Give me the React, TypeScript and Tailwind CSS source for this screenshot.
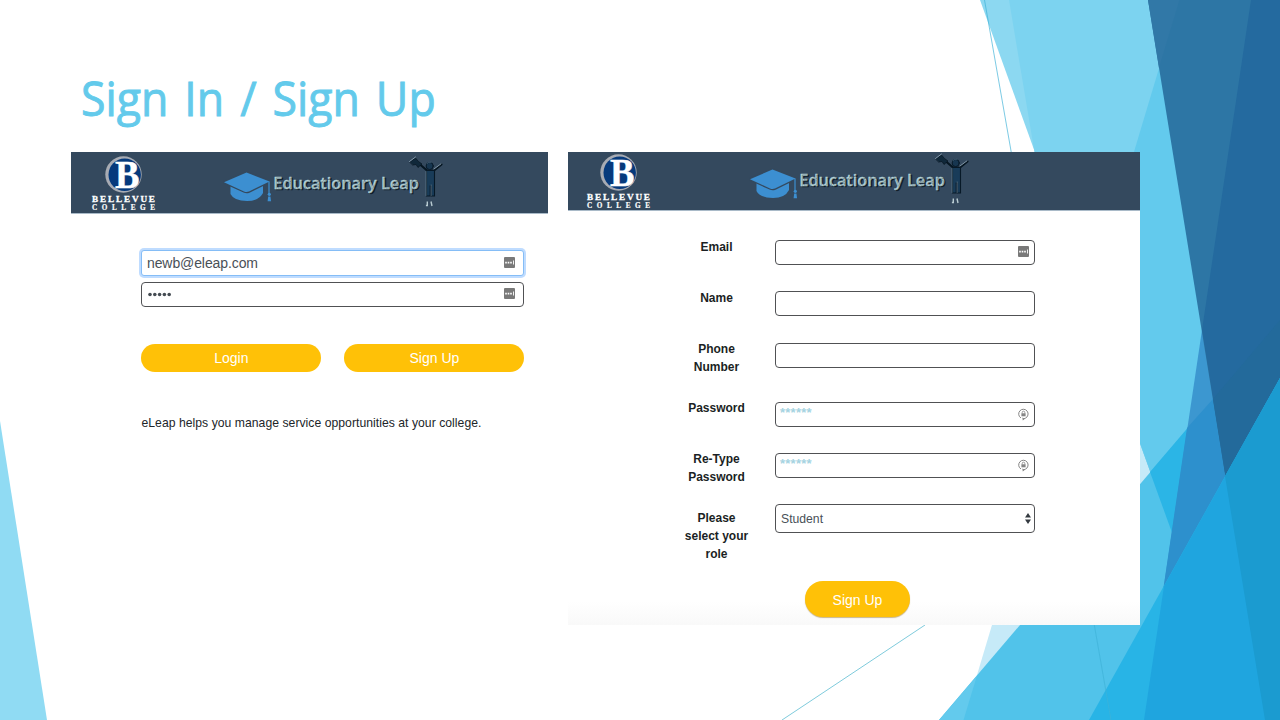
import type { ReactNode } from "react";

const SANS = "font-['Liberation_Sans',Arial,sans-serif]";

function Facets() {
  return (
    <svg className="absolute inset-0 h-full w-full" viewBox="0 0 1280 720" aria-hidden="true">
      <polygon points="0,421 47,720 0,720" fill="#90dbf3" />
      <polygon points="1179.5,0 1280,0 1280,720 963.5,720" fill="#c6eaf8" />
      <polygon points="980,0 1089,302 700,302 700,0" fill="#fff" />
      <polygon points="980,0 1280,0 1280,720 1240,720" fill="#8cd8f1" />
      <polygon points="1009,0 1280,0 1280,720 1240,720 1034.5,152" fill="#7cd3f0" />
      <polygon points="1179.5,0 1280,0 1280,720 1240,720 1089,302" fill="#63caed" />
      <polygon points="1280,320 1280,720 939,720" fill="#51c3ea" />
      <polygon points="977,675.5 963.5,720 939,720" fill="#63caed" />
      <polygon points="1150,472 1280,320 1280,720 1240,720" fill="#2bb5e6" />
      <polygon points="1202,330 1265,720 1144,720" fill="#3c97d0" />
      <polygon points="1187,428 1213,399 1265,720 1144,720" fill="#2d90cd" />
      <polygon points="1148,0 1280,0 1280,720 1265,720" fill="#2d76a5" />
      <polygon points="1148,0 1179.5,0 1159,68" fill="#3178a7" />
      <polygon points="1251,0 1280,0 1280,720 1265,720 1202,330" fill="#246a9f" />
      <polygon points="1213,399 1280,320 1280,720 1265,720" fill="#236a9b" />
      <polygon points="1280,378 1280,720 1089,720" fill="#28b4e6" />
      <polygon points="1164,586 1280,378 1280,720 1144,720" fill="#1fa5df" />
      <polygon points="1225,476 1280,378 1280,720 1265,720" fill="#1b9bd0" />
      <line x1="984.5" y1="0" x2="1111" y2="720" stroke="#3fb3d8" strokeWidth="0.8" opacity="0.85" />
      <line x1="782" y1="720" x2="925" y2="625" stroke="#7fcbdc" strokeWidth="1" />
    </svg>
  );
}

function CollegeLogo() {
  return (
    <svg width="70" height="61" viewBox="0 0 70 61" className="shrink-0" role="img" aria-label="Bellevue College">
      <circle cx="34.5" cy="22.5" r="18.2" fill="#a7abb3" />
      <circle cx="35.7" cy="22.7" r="16.2" fill="#063a7c" />
      <text x="26" y="35.5" textLength="24.5" lengthAdjust="spacingAndGlyphs" fill="#fff" stroke="#fff" strokeWidth="0.4" className="font-['Liberation_Serif',serif] text-[39px] font-bold">B</text>
      <text x="3" y="50" textLength="63" fill="#fff" stroke="#fff" strokeWidth="0.3" className="font-['Liberation_Serif',serif] text-[9.2px] font-bold">BELLEVUE</text>
      <text x="3" y="57.5" textLength="63" fill="#fff" stroke="#fff" strokeWidth="0.2" className="font-['Liberation_Serif',serif] text-[7.2px] font-bold">COLLEGE</text>
    </svg>
  );
}

function LeapLogo() {
  return (
    <svg width="222" height="61" viewBox="0 0 222 61" className="shrink-0" role="img" aria-label="Educationary Leap">
      <path d="M7.5 33V42Q11 49 24 49Q36 49 40 41V33Z" fill="#3c8fd1" />
      <path d="M1 30.2L23.5 20.5L46.5 29.5L26 39.5Q23.5 40.5 21 39.4Z" fill="#3c8fd1" stroke="#34495e" strokeWidth="2.6" paintOrder="stroke" />
      <path d="M46 29.5V42" stroke="#3c8fd1" strokeWidth="1.2" />
      <circle cx="46.3" cy="42.3" r="1.6" fill="#3c8fd1" />
      <path d="M45.2 44.5H47.4L48.1 49.3H44.6Z" fill="#3c8fd1" />
      <g className="font-['Open_Sans','Noto_Sans',sans-serif] text-[16px] font-semibold">
        <text x="50.3" y="36.6" textLength="145.5" lengthAdjust="spacingAndGlyphs" fill="#b6d2d6" stroke="#b6d2d6" strokeWidth="0.3" className="[text-shadow:1.4px_1.6px_0.6px_#101e29]">Educationary Leap</text>
      </g>
      <g fill="none" strokeLinecap="round">
        <path d="M197 12.5L204 18.5H211L218.5 12.5" stroke="#061622" strokeWidth="2.2" />
        <path d="M187 10L192.5 6L195.5 9.5L199 12L195 15.5L193 12.5L190 13Z" fill="#10283a" stroke="#06141f" strokeWidth="0.7" />
        <path d="M186.5 9.5L192.5 5" stroke="#8298aa" strokeWidth="1" />
        <path d="M203.5 18.5H211.5V44H208.5V34H207.2V44H203.5Z" fill="#193c59" stroke="#071927" strokeWidth="1.1" />
        <path d="M203 19.5V43.5M208.2 33V43.5" stroke="#6d8798" strokeWidth="0.7" />
        <circle cx="206.7" cy="14" r="3.6" fill="#173650" stroke="#071927" />
        <path d="M204 11.5A4 4 0 0 1 208 10.2" stroke="#4d6e86" strokeWidth="0.7" />
        <path d="M211 17L218 11.8" stroke="#8297a7" strokeWidth="1" />
        <path d="M204.3 49.5V53.5H202.9M208 49.5L209 54" stroke="#b8cbd1" strokeWidth="1.4" strokeLinecap="butt" />
      </g>
    </svg>
  );
}

function KeyIcon() {
  return (
    <svg width="11" height="11" viewBox="0 0 11 11" className="-mt-px shrink-0" aria-hidden="true">
      <rect width="11" height="11" rx="1" fill="#797979" />
      <path d="M1.2 4.8h1.6v1.6H1.2zM3.7 4.8h1.6v1.6H3.7zM6.2 4.8h1.6v1.6H6.2zM9 3.5h.9v4H9z" fill="#fff" />
    </svg>
  );
}

function LockIcon() {
  return (
    <svg width="11" height="13" viewBox="0 0 11 13" className="mt-px shrink-0" fill="none" stroke="#858585" aria-hidden="true">
      <path d="M3 10A4.7 4.7 0 1 1 7.4 10.2L5 11.2" strokeWidth="1" />
      <path d="M4.3 9.4L6.8 10.8L4.8 12.6Z" fill="#858585" stroke="none" />
      <path d="M4.2 5.6V4.5a1.3 1.3 0 0 1 2.6 0V5.6" strokeWidth="0.8" />
      <rect x="3.4" y="5.3" width="4.2" height="3" fill="#858585" stroke="none" />
    </svg>
  );
}

function Field({ label, children, className }: { label: string; children?: ReactNode; className: string }) {
  return (
    <div className={`flex items-start ${className}`}>
      <div className="w-[81px] text-center text-[12px] leading-[18px] font-bold whitespace-pre-line text-[#1b1f24]">{label}</div>
      {children}
    </div>
  );
}

const BOX = "ml-[18px] mt-[2.4px] flex h-[25px] w-[260px] items-center justify-between rounded-[4px] border-[1.5px] border-[#505154] bg-white pl-[5px] pr-[5px]";

function Stars() {
  return <span className="-mt-[3px] -ml-px text-[13px] leading-none font-bold tracking-[0.25px] text-[#a5d3e1]">******</span>;
}

export default function App() {
  return (
    <main className={`relative h-[720px] w-[1280px] overflow-hidden bg-white ${SANS}`}>
      <Facets />
      <div className="relative flex h-full flex-col pl-[71px]">
        <h1 className="flex h-[152px] w-fit origin-left scale-x-[0.95] items-start pt-[65px] pl-[10.5px] font-['Open_Sans','Noto_Sans',sans-serif] text-[47px] leading-[66px] font-normal [word-spacing:4.6px] whitespace-nowrap text-[#63caeb] [-webkit-text-stroke:0.9px_#63caeb]">
          Sign In / Sign Up
        </h1>
        <div className="flex items-start gap-5">
          <section className="w-[477px]">
            <header className="flex h-[61.5px] border-b border-[#a9bac8] bg-[#34495e] pl-[18px]">
              <CollegeLogo />
              <div className="pl-[64px]"><LeapLogo /></div>
            </header>
            <div className="pt-[36px] pl-[70px]">
              <div className="flex h-[26px] w-[383px] items-center justify-between rounded-[3px] border border-[#85bdf6] bg-white pr-[8px] pl-[5px] text-[14px] text-[#495057] shadow-[0_0_0_2px_#bfdcff]">
                <span className="pt-[2px] tracking-[-0.1px]">newb@eleap.com</span>
                <KeyIcon />
              </div>
              <div className="mt-[6px] flex h-[25px] w-[383px] items-center justify-between rounded-[4px] border-[1.5px] border-[#505154] bg-white pr-[8px] pl-[6px]">
                <svg width="24" height="5" viewBox="0 0 24 5" className="mt-px" fill="#444b52" aria-label="Password">
                  {[2, 6.8, 11.6, 16.4, 21.2].map((cx) => <circle key={cx} cx={cx} cy="2.5" r="1.8" />)}
                </svg>
                <KeyIcon />
              </div>
              <div className="mt-[37px] flex gap-[23px] pl-[0.4px] text-[14px] text-white">
                <button className="h-[28px] w-[180px] rounded-full bg-[#ffc107] pt-px">Login</button>
                <button className="h-[28px] w-[180px] rounded-full bg-[#ffc107] pt-px">Sign Up</button>
              </div>
              <p className="mt-[42px] pl-[0.5px] text-[12.2px] leading-[18px] tracking-[0.03px] whitespace-nowrap text-[#212529]">eLeap helps you manage service opportunities at your college.</p>
            </div>
          </section>
          <section className="h-[473px] w-[572px] bg-linear-to-b from-white from-95% to-[#f9f9f9]">
            <header className="flex h-[58.5px] border-b border-[#a9bac8] bg-[#34495e] pl-[16px]">
              <div className="-mt-[2.5px] h-[61px]"><CollegeLogo /></div>
              <div className="-mt-[3px] h-[61px] pl-[95px]"><LeapLogo /></div>
            </header>
            <div className="flex flex-col pt-[27px] pl-[108px]">
              <Field label="Email" className="h-[51.4px]"><div className={BOX}><span /><KeyIcon /></div></Field>
              <Field label="Name" className="h-[51.3px]"><div className={BOX} /></Field>
              <Field label={"Phone\nNumber"} className="h-[59px]"><div className={BOX} /></Field>
              <Field label="Password" className="h-[51.3px]"><div className={BOX}><Stars /><LockIcon /></div></Field>
              <Field label={"Re-Type\nPassword"} className="h-[59px]"><div className={BOX}><Stars /><LockIcon /></div></Field>
              <Field label={"Please\nselect your\nrole"} className="h-[72px]">
                <div className="-mt-[5px] ml-[18px] flex h-[29px] w-[260px] items-center justify-between rounded-[4px] border-[1.5px] border-[#505154] bg-white pr-[3px] pl-[5px] text-[12.2px] text-[#495057]">
                  Student
                  <svg width="6" height="11" viewBox="0 0 6 11" fill="#343a40" aria-hidden="true"><path d="M3 0L6 4.5H0ZM3 11L0 6.5H6Z" /></svg>
                </div>
              </Field>
              <button className="ml-[129px] h-[36px] w-[105px] rounded-full bg-[#ffc107] pt-[2px] text-[14px] text-white shadow-[0_1px_1px_#c9b68a]">Sign Up</button>
            </div>
          </section>
        </div>
      </div>
    </main>
  );
}
